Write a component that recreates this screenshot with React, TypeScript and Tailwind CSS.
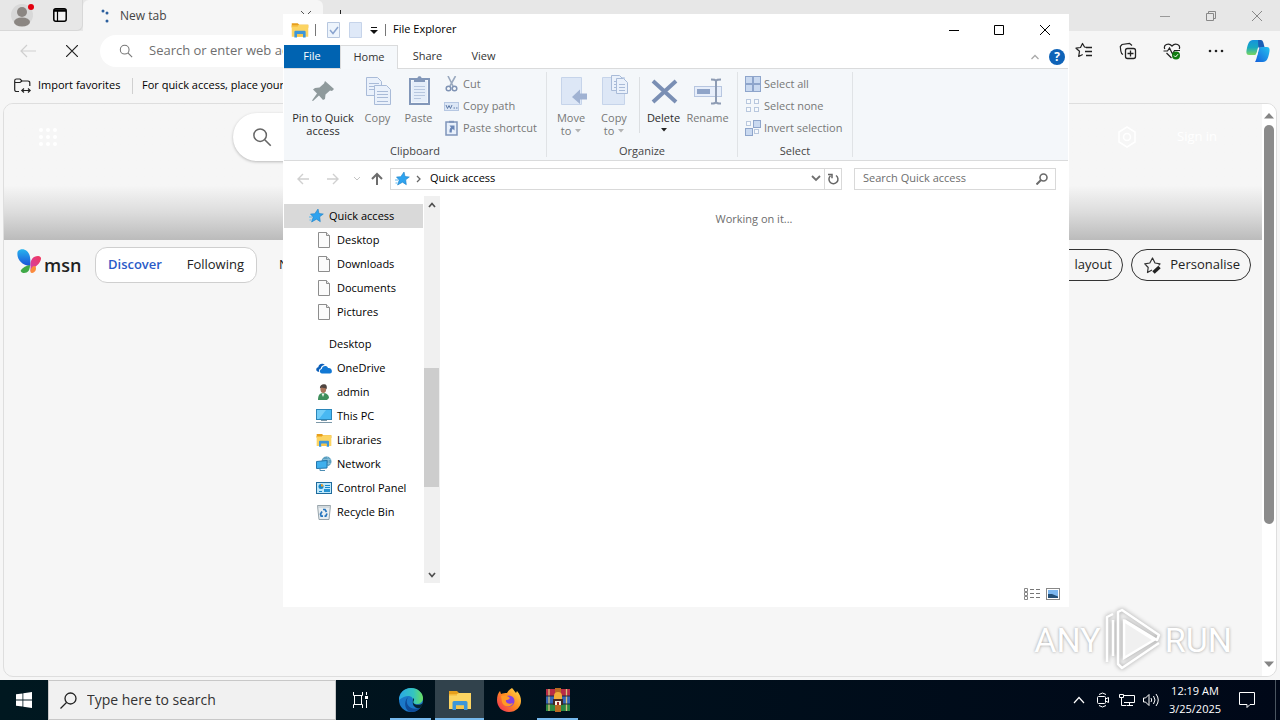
import React from "react";

type IconProps = { w: number; h: number; vb?: string; children: React.ReactNode; className?: string };

function Svg({ w, h, vb, children, className = "" }: IconProps) {
  return (
    <svg width={w} height={h} viewBox={vb ?? `0 0 ${w} ${h}`} fill="none" className={"shrink-0 " + className} aria-hidden="true">
      {children}
    </svg>
  );
}

/* ---------- shared icons ---------- */

function FolderIcon({ size = 18 }: { size?: number }) {
  return (
    <Svg w={size} h={size} vb="0 0 24 24">
      <path d="M1 3h8l2 2h12v4H1z" fill="#e79f1c" />
      <path d="M1 6h8l2-1h12v16H1z" fill="#fcd462" />
      <path d="M1 6h8v1.500H1z" fill="#f5b93a" />
      <path d="M6 13h12a1.500 1.500 0 0 1 1.500 1.500V22H16v-4.500H8V22H4.500v-7.500A1.500 1.500 0 0 1 6 13z" fill="#3d96d9" />
      <path d="M8 17.500h8V21H8z" fill="#f7c64b" />
    </Svg>
  );
}

function StarBlue() {
  return (
    <Svg w={16} h={16}>
      <path d="M10 1l1 4.500 4.300.5-3.600 2.800.6 4.900-3.800-2.500L3.600 14l1.600-4.900L2.500 6l4.300-.3z" fill="#2ea3ef" stroke="#1d7fc6" strokeWidth=".6" />
      <path d="M1 9h3M1.500 12h2" stroke="#5bb8f0" strokeWidth="1" />
    </Svg>
  );
}

function PageIcon() {
  return (
    <Svg w={16} h={16}>
      <path d="M2.500.5h8l3 3v12h-11z" fill="#fbfbfb" stroke="#8d8d8d" />
      <path d="M10.500.5v3h3" stroke="#8d8d8d" fill="#e6e6e6" />
    </Svg>
  );
}

function OneDriveIcon() {
  return (
    <Svg w={16} h={16}>
      <path d="M1.500 11.500C-.5 10.500 0 7.500 2.300 7.200 2.500 4 6.500 2.500 8.800 5 6.500 5 5 6.500 4.800 8.500 3 9 2.700 10.500 3.300 12z" fill="#0c5fb8" />
      <path d="M6 13.500c-3-.5-2.500-4.300-.2-4.500.3-3.500 5.200-4 6.200-1 3-.3 4 2 3.800 3 .3 1.500-.6 2.500-1.800 2.500z" fill="#1278d4" />
    </Svg>
  );
}

function UserIcon() {
  return (
    <Svg w={16} h={16}>
      <path d="M2 16c0-4.500 1.500-7 5-7s6 2 6 5l-2 2z" fill="#3f8f5c" />
      <path d="M5.500 9.500L7 13l1.500-3.500z" fill="#e9f3ea" />
      <ellipse cx="7.300" cy="5.200" rx="2.800" ry="3.800" fill="#a9745a" />
      <path d="M4 4.500C3.500 1 6.500-.3 8.500.3c2.500.3 2.700 3 2 5C9.500 3.500 7 4 5.500 3.500z" fill="#4f4540" />
    </Svg>
  );
}

function PcIcon() {
  return (
    <Svg w={16} h={16}>
      <rect x=".5" y="1.500" width="15" height="10" fill="#48b8f2" stroke="#2b86b9" />
      <path d="M1 2h9L3 11H1z" fill="#74cef8" />
      <path d="M5 12.500h6M0 14.500h16" stroke="#7c98a8" />
    </Svg>
  );
}

function NetworkIcon() {
  return (
    <Svg w={16} h={16}>
      <circle cx="10.500" cy="5.500" r="5" fill="#5c9fc0" />
      <path d="M10.500.500c3 2 3 8 0 10M7 3.500h8M7 7.500h8" stroke="#8cc3dd" strokeWidth=".8" />
      <path d="M.5 5.500l10.500-1v7.500l-10.500.5z" fill="#3fb0ee" stroke="#2276ad" />
      <path d="M4 12.500v2h5" stroke="#4c8db3" />
    </Svg>
  );
}

function ControlIcon() {
  return (
    <Svg w={16} h={16}>
      <rect x=".5" y="2.500" width="15" height="11" fill="#bfe8fb" stroke="#1f6b9c" />
      <circle cx="5" cy="6.500" r="2.500" fill="#1687c9" />
      <path d="M5 4v2.500h2.500A2.500 2.500 0 0 0 5 4z" fill="#f0a02a" />
      <path d="M9 5.500h5M9 7.500h5M3 11.500h3" stroke="#1687c9" />
      <rect x="8" y="9" width="6" height="3" fill="#2793d1" />
    </Svg>
  );
}

function BinIcon() {
  return (
    <Svg w={16} h={16}>
      <path d="M1.500 1.500h13l-1.500 14H3z" fill="#e9eef1" stroke="#97a3aa" />
      <path d="M1.500 3h13" stroke="#bcc6cb" />
      <path d="M7 5.500h2l1.500 2.500M11 9.500l-1.200 2.700H8.500M7 12.200H5.200L4.500 10 6 7.500" stroke="#2675bd" strokeWidth="1.700" />
    </Svg>
  );
}

/* ---------- ribbon icons ---------- */

function PinIcon() {
  return (
    <Svg w={32} h={32}>
      <path d="M18 6l9 8-2 2-2-.5-4.500 4L18 24l-2 1-4-4.500L6 26l-1-.6 5-6.900-4-4L8 13l4.500-.5 4.500-4z" fill="#8f9a9c" />
    </Svg>
  );
}

function Sheet({ x, y, w = 14, h = 19 }: { x: number; y: number; w?: number; h?: number }) {
  return (
    <g transform={`translate(${x} ${y})`}>
      <path d={`M.5.5h${w - 5}l4 4v${h - 5}H.5z`} fill="#eaf1fb" stroke="#a9bbd8" />
      <path d={`M${w - 5}.5v4h4.500`} stroke="#a9bbd8" />
      <path d={`M3 6.500h${w - 6}M3 9.500h${w - 6}M3 12.500h${w - 6}`} stroke="#a9bbd8" />
    </g>
  );
}

function CopyIcon() {
  return (
    <Svg w={32} h={32}>
      <Sheet x={4} y={2} w={16} />
      <Sheet x={12} y={10} w={17} h={20} />
      <path d="M15 26.500h11" stroke="#a9bbd8" />
    </Svg>
  );
}

function PasteIcon() {
  return (
    <Svg w={32} h={32}>
      <rect x="7" y="4" width="19" height="25" fill="#fff" stroke="#8297b9" strokeWidth="2" />
      <rect x="8.500" y="5.500" width="16" height="22" fill="#e4edf9" />
      <path d="M11 3h3.500c0-2.500 4-2.500 4 0H22v4H11z" fill="#8297b9" />
      <path d="M11 11.500h11M11 14.500h11M11 17.500h11M11 20.500h11M11 23.500h7" stroke="#b7c7df" />
    </Svg>
  );
}

function CutIcon() {
  return (
    <Svg w={16} h={16}>
      <path d="M4 0l5 10M11.500 0L6 10" stroke="#9aa9bf" strokeWidth="1.600" />
      <circle cx="4.500" cy="12.500" r="2.300" stroke="#7f93b4" strokeWidth="1.500" />
      <circle cx="10.500" cy="12.500" r="2.300" stroke="#7f93b4" strokeWidth="1.500" />
    </Svg>
  );
}

function PathIcon() {
  return (
    <Svg w={16} h={16}>
      <rect x=".5" y="4.500" width="14" height="8" fill="#dce7f6" stroke="#b6c7e2" />
      <path d="M2 7l1.500 3.500L5 7.500l1.500 3L8 7M9.500 10h1.500M12 10h1.500" stroke="#5f7ba8" />
    </Svg>
  );
}

function ShortcutIcon() {
  return (
    <Svg w={16} h={16}>
      <rect x="2" y="2" width="11" height="13" fill="#e8f0fb" stroke="#7f95ba" strokeWidth="1.500" />
      <path d="M5 .8h5v2H5z" fill="#7f95ba" />
      <path d="M5.500 12.500c0-2.500 0-4 1.500-5L5.500 5.500h5v5L8.800 9c-1 .5-1 1.500-1 3.500z" fill="#6a86b6" />
    </Svg>
  );
}

function MoveIcon() {
  return (
    <Svg w={32} h={32}>
      <path d="M6.500 2.500h20v27h-20z" fill="#dde7f6" stroke="#c6d4ea" />
      <path d="M17 22l8-7.500V18.500h7v6h-7V29z" fill="#a0b2d2" />
    </Svg>
  );
}

function CopyToIcon() {
  return (
    <Svg w={32} h={32}>
      <path d="M4.500 2.500h22v27h-22z" fill="#dde7f6" stroke="#c6d4ea" />
      <Sheet x={13} y={0} w={13} h={16} />
      <Sheet x={18} y={3} w={12} h={16} />
    </Svg>
  );
}

function DeleteIcon() {
  return (
    <Svg w={32} h={32}>
      <path d="M5 6l23 21M28 6L5 27" stroke="#7a8fb4" strokeWidth="4" />
    </Svg>
  );
}

function RenameIcon() {
  return (
    <Svg w={32} h={32}>
      <rect x="2.500" y="11.500" width="27" height="10" fill="#e7eefa" stroke="#b7c6e0" />
      <rect x="5" y="14" width="13" height="5" fill="#8fa4c8" />
      <path d="M24 5v22M19 4.500c3 0 5 0 5 2 0-2 2-2 5-2M19 28.500c3 0 5 0 5-2 0 2 2 2 5 2" stroke="#8d9bb3" strokeWidth="2" />
    </Svg>
  );
}

function GridIcon({ kind }: { kind: "all" | "none" | "invert" }) {
  const cells = [
    [0, 0], [8, 0], [0, 8], [8, 8],
  ];
  return (
    <Svg w={16} h={16}>
      {cells.map(([x, y], i) => {
        const full = kind === "all" || (kind === "invert" && (i === 1 || i === 2));
        return full ? (
          <rect key={i} x={x + 0.5} y={y + 0.5} width="7" height="7" fill="#c9d9f0" stroke="#8ea5cb" />
        ) : (
          <rect key={i} x={x + 1.5} y={y + 1.5} width="4" height="4" fill="#f7fafd" stroke="#b9c8de" />
        );
      })}
    </Svg>
  );
}

/* ---------- browser icons ---------- */

function SearchGlyph({ size, color }: { size: number; color: string }) {
  return (
    <Svg w={size} h={size} vb="0 0 16 16">
      <circle cx="6.500" cy="6.500" r="5" stroke={color} strokeWidth="1.200" />
      <path d="M10.200 10.200L15 15" stroke={color} strokeWidth="1.300" />
    </Svg>
  );
}

function MsnLogo() {
  return (
    <Svg w={25} h={25} className="mb-2">
      <defs>
        <linearGradient id="msnBlue" x1="0" y1="0" x2="0" y2="1">
          <stop offset="0" stopColor="#27b4ee" />
          <stop offset="1" stopColor="#1a50d8" />
        </linearGradient>
        <linearGradient id="msnPink" x1="1" y1="0" x2="0" y2="1">
          <stop offset="0" stopColor="#f2395a" />
          <stop offset="1" stopColor="#d13fae" />
        </linearGradient>
      </defs>
      <path d="M1 2c4-4 11-1 12 6 .5 3 .5 6 .3 9C8 17 2 13 .8 8 .2 5 .2 3 1 2z" fill="url(#msnBlue)" />
      <path d="M13 16c0 5-2 8-6 8-2 0-4-1.500-3-3 2-2.500 5-4.500 9-5z" fill="#3fa947" />
      <path d="M13.500 17C13 11 16 7 21 7c2 0 3.500 1.500 3 3C23 15 19 17 13.500 22z" fill="url(#msnPink)" />
      <path d="M13.500 21c1-3 3-5 5-3.500 1.500 2.500-.5 6.500-3.500 6.500-1.500 0-2-1.500-1.500-3z" fill="#fb8a3c" />
    </Svg>
  );
}

function CopilotIcon() {
  return (
    <Svg w={24} h={24} className="ml-[21px]">
      <defs>
        <linearGradient id="copA" x1="0" y1="0" x2="0" y2="1">
          <stop offset="0" stopColor="#1593dd" />
          <stop offset=".5" stopColor="#17a9c0" />
          <stop offset="1" stopColor="#7ad65f" />
        </linearGradient>
        <linearGradient id="copB" x1="1" y1="0" x2="0" y2="1">
          <stop offset="0" stopColor="#23c2f0" />
          <stop offset="1" stopColor="#145fdb" />
        </linearGradient>
      </defs>
      <path d="M7 1h8c-2 2-3 14-6 15H3c-3 0-3-3-2-7S3 1 7 1z" fill="url(#copA)" />
      <path d="M17 23H9c2-2 3-14 6-15h6c3 0 3 3 2 7s-2 8-6 8z" fill="url(#copB)" />
      <path d="M12 1h3c2 0 2.500 3 3.500 7H15c-1 .5-2 3-2.500 6z" fill="#1a5fb6" />
      <path d="M13.500 8.500l-2.500 8H10l2-8z" fill="#f3f8fc" />
    </Svg>
  );
}

function FavoritesIcon() {
  return (
    <Svg w={18} h={18}>
      <path d="M11.500 5.500L9.500 5 7.500 1.500 5.500 5.500l-4.500.7 3.500 3-.8 5.300 4-2" stroke="#222" strokeWidth="1.200" strokeLinejoin="round" />
      <path d="M11 5.500h6M10 9.500h7M11 13.500h6" stroke="#222" strokeWidth="1.300" />
    </Svg>
  );
}

function CollectionsIcon() {
  return (
    <Svg w={18} h={18}>
      <rect x="6.500" y="6.500" width="10" height="10" rx="2" stroke="#222" strokeWidth="1.300" />
      <path d="M11.500 8.500v6M8.500 11.500h6" stroke="#222" strokeWidth="1.300" />
      <path d="M4 12.500C2.500 12 2 10.500 1.800 9L1.300 4.500 3 2.500l7.500-1.200L13 3.500" stroke="#222" strokeWidth="1.200" />
    </Svg>
  );
}

function HealthIcon() {
  return (
    <Svg w={18} h={18}>
      <path d="M1.800 7C0 3 5.500 0 9 4c3.500-4 9-1 7.200 3M3.500 11l5 5" stroke="#222" strokeWidth="1.200" />
      <path d="M.5 9h4l2-3 3 6 2-3.500h5.500" stroke="#222" strokeWidth="1.200" />
      <circle cx="13" cy="13.500" r="4" fill="#107c10" />
      <path d="M11 13.500l1.500 1.500 2.500-2.800" stroke="#fff" />
    </Svg>
  );
}

/* ---------- explorer parts ---------- */

function BigButton({ icon, lines, width, active, arrow }: { icon: React.ReactNode; lines: string[]; width: string; active?: boolean; arrow?: "below" | "inline" }) {
  return (
    <button type="button" className={"flex flex-col items-center pt-0.5 leading-[13px] " + width + (active ? " text-[#2b2b2b]" : " text-[#777]")}>
      {icon}
      <span className="mt-1 block whitespace-nowrap">{lines[0]}</span>
      {lines[1] && (
        <span className="flex items-center gap-1 whitespace-nowrap">
          {lines[1]}
          {arrow === "inline" && <Svg w={6} h={4}><path d="M0 0h6L3 3.500z" fill="#b4b4b4" /></Svg>}
        </span>
      )}
      {arrow === "below" && <Svg w={6} h={4} className="mt-1"><path d="M0 0h6L3 3.500z" fill="#222" /></Svg>}
    </button>
  );
}

function SmallButton({ icon, label }: { icon: React.ReactNode; label: string }) {
  return (
    <button type="button" className="flex h-[22px] items-center gap-[3px] whitespace-nowrap text-[#777]">
      {icon}
      {label}
    </button>
  );
}

function Group({ title, width, children }: { title: string; width: string; children: React.ReactNode }) {
  return (
    <section className={"my-[3px] flex flex-col justify-between border-r border-[#e0e3e6] " + width}>
      <div className="flex pt-px">{children}</div>
      <h2 className="text-center leading-3 text-[#444]">{title}</h2>
    </section>
  );
}

function TreeRow({ icon, label, selected, indent }: { icon?: React.ReactNode; label: string; selected?: boolean; indent: string }) {
  return (
    <li>
      <a href="#" className={"flex h-6 items-center gap-[5px] whitespace-nowrap text-black " + indent + (selected ? " bg-[#d9d9d9]" : "")}>
        {icon}
        {label}
      </a>
    </li>
  );
}

function Explorer() {
  return (
    <section aria-label="File Explorer" className="absolute left-[283px] top-[14px] flex h-[593px] w-[786px] flex-col bg-white px-px text-[11px] text-black">
      <header className="flex h-[31px] shrink-0 items-center">
        <div className="flex flex-1 items-center pl-[7px]">
          <FolderIcon size={18} />
          <span className="ml-1.5 h-3 w-px bg-[#777]" />
          <Svg w={14} h={16} className="ml-[11px]">
            <path d="M.5.5h12v15H.5z" fill="#edf4fc" stroke="#b7c7df" />
            <path d="M3 8l3 3.500L11 5" stroke="#8aa4cf" strokeWidth="1.500" />
          </Svg>
          <Svg w={14} h={16} className="ml-2">
            <path d="M.5.5h12v15H.5z" fill="#dfe9f8" stroke="#c6d4ea" />
          </Svg>
          <Svg w={8} h={8} className="ml-[7px]">
            <path d="M1 1.500h6" stroke="#111" />
            <path d="M0 4h8L4 8z" fill="#111" />
          </Svg>
          <span className="ml-[7px] h-3 w-px bg-[#777]" />
          <h1 className="ml-[7px]">File Explorer</h1>
        </div>
        <button type="button" aria-label="Minimize" className="flex w-[45px] justify-center"><Svg w={10} h={10}><path d="M0 5.500h10" stroke="#000" /></Svg></button>
        <button type="button" aria-label="Maximize" className="flex w-[45px] justify-center"><Svg w={10} h={10}><path d="M.5.500h9v9h-9z" stroke="#000" /></Svg></button>
        <button type="button" aria-label="Close" className="flex w-[47px] justify-center"><Svg w={10} h={10}><path d="M0 0l10 10M10 0L0 10" stroke="#000" /></Svg></button>
      </header>

      <nav className="flex h-6 shrink-0 border-b border-[#dadbdc] text-[#333]">
        <button type="button" className="w-14 bg-[#0063b1] text-white">File</button>
        <button type="button" className="-mb-px w-[58px] border border-b-0 border-[#dadbdc] bg-[#f5f8fb]">Home</button>
        <button type="button" className="w-[59px]">Share</button>
        <button type="button" className="w-[53px]">View</button>
        <div className="flex flex-1 items-center justify-end gap-2.5 pr-[3px]">
          <Svg w={8} h={6}><path d="M.5 5L4 1.500 7.500 5" stroke="#aaa" strokeWidth="1.300" /></Svg>
          <button type="button" aria-label="Help" className="flex size-4 items-center justify-center rounded-full bg-[#0f63b8] text-xs font-bold text-white">?</button>
        </div>
      </nav>

      <div className="flex h-[92px] shrink-0 border-b border-[#dadbdc] bg-[#f4f7fa]">
        <Group title="Clipboard" width="w-[263px]">
          <BigButton icon={<PinIcon />} lines={["Pin to Quick", "access"]} width="w-[78px]" active />
          <BigButton icon={<CopyIcon />} lines={["Copy"]} width="w-[31px]" />
          <BigButton icon={<PasteIcon />} lines={["Paste"]} width="w-[51px]" />
          <div className="flex flex-col">
            <SmallButton icon={<CutIcon />} label="Cut" />
            <SmallButton icon={<PathIcon />} label="Copy path" />
            <SmallButton icon={<ShortcutIcon />} label="Paste shortcut" />
          </div>
        </Group>
        <Group title="Organize" width="w-[191px]">
          <BigButton icon={<MoveIcon />} lines={["Move", "to"]} width="w-[48px]" arrow="inline" />
          <BigButton icon={<CopyToIcon />} lines={["Copy", "to"]} width="w-[38px]" arrow="inline" />
          <span className="mx-1.5 mt-1 h-14 w-px bg-[#dcdfe2]" />
          <BigButton icon={<DeleteIcon />} lines={["Delete"]} width="w-[35px]" active arrow="below" />
          <BigButton icon={<RenameIcon />} lines={["Rename"]} width="w-[53px]" />
        </Group>
        <Group title="Select" width="w-[115px]">
          <div className="flex flex-col pl-[7px]">
            <SmallButton icon={<GridIcon kind="all" />} label="Select all" />
            <SmallButton icon={<GridIcon kind="none" />} label="Select none" />
            <SmallButton icon={<GridIcon kind="invert" />} label="Invert selection" />
          </div>
        </Group>
      </div>

      <div className="flex h-[35px] shrink-0 items-center pr-3">
        <div className="flex w-[106px] items-center pl-[13px]">
          <Svg w={12} h={12}><path d="M12 6H1M6 1L1 6l5 5" stroke="#d0d0d0" strokeWidth="1.400" /></Svg>
          <Svg w={12} h={12} className="ml-[18px]"><path d="M0 6h11M6 1l5 5-5 5" stroke="#d0d0d0" strokeWidth="1.400" /></Svg>
          <Svg w={8} h={5} className="ml-3.5"><path d="M1 1l3 3 3-3" stroke="#c4c4c4" /></Svg>
          <Svg w={12} h={14} className="ml-2.5"><path d="M6 13V2M1 7l5-5 5 5" stroke="#6d6d6d" strokeWidth="2" /></Svg>
        </div>
        <div className="flex h-[22px] flex-1 items-center border border-[#d9d9d9] pl-[3px]">
          <StarBlue />
          <Svg w={6} h={8} className="ml-1.5"><path d="M1 1l3 3-3 3" stroke="#666" strokeWidth="1.300" /></Svg>
          <span className="ml-2 flex-1">Quick access</span>
          <Svg w={10} h={7} className="mr-[3px]"><path d="M1 1l4 4 4-4" stroke="#707070" strokeWidth="1.800" /></Svg>
          <button type="button" aria-label="Refresh" className="flex h-full w-[17px] items-center justify-center border-l border-[#d9d9d9]">
            <Svg w={12} h={12}><path d="M9 2.500A4.500 4.500 0 1 1 3.500 2.800M1 1.500h4v3.800" stroke="#666" strokeWidth="1.500" /></Svg>
          </button>
        </div>
        <label className="ml-3 flex h-[22px] w-[202px] items-center border border-[#d9d9d9] pl-2 pr-[7px]">
          <input aria-label="Search Quick access" placeholder="Search Quick access" className="min-w-0 flex-1 outline-none placeholder:text-[#6d6d6d]" />
          <Svg w={12} h={12}><circle cx="7.500" cy="4.500" r="3.500" stroke="#6b6b6b" strokeWidth="1.600" /><path d="M5 7l-4.500 4.500" stroke="#6b6b6b" strokeWidth="2" /></Svg>
        </label>
      </div>

      <div className="flex min-h-0 flex-1">
        <ul className="w-[139px] shrink-0 pt-2">
          <TreeRow icon={<StarBlue />} label="Quick access" selected indent="pl-6" />
          <TreeRow icon={<PageIcon />} label="Desktop" indent="pl-8" />
          <TreeRow icon={<PageIcon />} label="Downloads" indent="pl-8" />
          <TreeRow icon={<PageIcon />} label="Documents" indent="pl-8" />
          <TreeRow icon={<PageIcon />} label="Pictures" indent="pl-8" />
          <li className="h-2" />
          <TreeRow label="Desktop" indent="pl-[45px]" />
          <TreeRow icon={<OneDriveIcon />} label="OneDrive" indent="pl-8" />
          <TreeRow icon={<UserIcon />} label="admin" indent="pl-8" />
          <TreeRow icon={<PcIcon />} label="This PC" indent="pl-8" />
          <TreeRow icon={<FolderIcon size={16} />} label="Libraries" indent="pl-8" />
          <TreeRow icon={<NetworkIcon />} label="Network" indent="pl-8" />
          <TreeRow icon={<ControlIcon />} label="Control Panel" indent="pl-8" />
          <TreeRow icon={<BinIcon />} label="Recycle Bin" indent="pl-8" />
        </ul>
        <div className="ml-px flex w-4 shrink-0 flex-col items-center justify-between bg-[#f0f0f0] pb-[5px] pt-1.5 pr-px">
          <Svg w={8} h={6}><path d="M1 5l3-3.500L7 5" stroke="#505050" strokeWidth="1.700" /></Svg>
          <span className="mb-[85px] mt-auto h-[119px] w-full bg-[#cdcdcd]" />
          <Svg w={8} h={6}><path d="M1 1l3 3.500L7 1" stroke="#505050" strokeWidth="1.700" /></Svg>
        </div>
        <p className="flex-1 pt-4 text-center leading-[14px] text-[#6d6d6d]">Working on it...</p>
      </div>

      <footer className="flex h-6 shrink-0 items-center justify-end gap-1.5 pr-2 pb-[3px]">
        <Svg w={16} h={12}>
          <path d="M.5.5h3v3h-3zM.5 4.500h3v3h-3zM.5 8.500h3v3h-3z" stroke="#888" />
          <path d="M6 1.500h4M12 1.500h4M6 5.500h4M12 5.500h4M6 9.500h4M12 9.500h4" stroke="#777" />
        </Svg>
        <Svg w={14} h={12}>
          <rect x=".5" y=".5" width="13" height="11" fill="#fff" stroke="#888" />
          <rect x="2" y="2" width="10" height="8" fill="#7cb7f0" />
          <path d="M2 6l4 0 6 2.500V10H2z" fill="#245078" />
        </Svg>
      </footer>
    </section>
  );
}

/* ---------- browser ---------- */

function Browser() {
  return (
    <div className="flex min-h-0 flex-1 flex-col bg-[#f6f6f6]">
      <div className="flex h-[31px] shrink-0 bg-[#e7e7e7]">
        <div className="flex w-[83px] items-center rounded-br-md border-b border-r border-[#d8d8d8] pl-[11px]">
          <Svg w={24} h={24}>
            <circle cx="11" cy="12" r="11" fill="#d8d8d8" />
            <circle cx="11" cy="9" r="5" fill="#8b8682" />
            <ellipse cx="11" cy="19" rx="8" ry="4.500" fill="#8b8682" />
            <circle cx="20" cy="4" r="3" fill="#e3000f" />
          </Svg>
          <Svg w={14} h={14} className="ml-[18px]">
            <rect x=".8" y=".8" width="12.400" height="12.400" rx="2" fill="#f2f2f2" stroke="#000" strokeWidth="1.500" />
            <path d="M1 2.500h12" stroke="#000" strokeWidth="2.500" />
            <path d="M4.500 3v10" stroke="#000" strokeWidth="1.200" />
          </Svg>
        </div>
        <div className="flex w-60 items-center rounded-t-md bg-[#f6f6f6] pl-[17px] text-xs text-[#444]">
          <Svg w={14} h={16}><circle cx="3" cy="3" r="1.500" fill="#2c5f9e" /><circle cx="7" cy="5" r="1.500" fill="#2c5f9e" /><circle cx="7" cy="13" r="1.500" fill="#2c5f9e" /></Svg>
          <span className="ml-1.5 flex-1">New tab</span>
          <Svg w={10} h={10} className="mr-3"><path d="M0 0l10 10M10 0L0 10" stroke="#555" /></Svg>
        </div>
        <div className="flex flex-1 items-center pl-3"><Svg w={12} h={12}><path d="M5.500 0v12M0 6h12" stroke="#222" /></Svg></div>
        <button type="button" aria-label="Minimize browser" className="flex w-[46px] items-center justify-center"><Svg w={10} h={10}><path d="M0 5.500h10" stroke="#999" /></Svg></button>
        <button type="button" aria-label="Restore browser" className="flex w-[46px] items-center justify-center"><Svg w={10} h={10}><path d="M.5 2.500h7v7h-7zM2.500 2.500v-2h7v7h-2" stroke="#888" /></Svg></button>
        <button type="button" aria-label="Close browser" className="flex w-[46px] items-center justify-center"><Svg w={12} h={12}><path d="M1 1l10 10M11 1L1 11" stroke="#888" /></Svg></button>
      </div>

      <div className="flex h-10 shrink-0 items-center pr-2.5">
        <Svg w={16} h={14} className="ml-5"><path d="M16 7H1M7 1L1 7l6 6" stroke="#cfcfcf" strokeWidth="1.200" /></Svg>
        <Svg w={12} h={12} className="ml-[30px]"><path d="M0 0l12 12M12 0L0 12" stroke="#222" strokeWidth="1.200" /></Svg>
        <label className="ml-[22px] mr-[26px] flex h-8 flex-1 items-center rounded-full bg-white pl-[19px]">
          <SearchGlyph size={14} color="#777" />
          <input aria-label="Address" placeholder="Search or enter web address" className="ml-4 min-w-0 flex-1 text-[13px] outline-none placeholder:text-[#6f6f6f]" />
        </label>
        <div className="flex items-center gap-[26px]">
          <FavoritesIcon />
          <CollectionsIcon />
          <HealthIcon />
          <Svg w={18} h={18}><circle cx="3" cy="9" r="1.300" fill="#222" /><circle cx="9" cy="9" r="1.300" fill="#222" /><circle cx="15" cy="9" r="1.300" fill="#222" /></Svg>
        </div>
        <CopilotIcon />
      </div>

      <div className="flex h-8 shrink-0 items-center whitespace-nowrap pb-[3px] pl-3.5 text-[11px] text-black">
        <Svg w={17} h={16}>
          <path d="M5 13.500H2.500A1.800 1.800 0 0 1 .7 11.700v-9C.7 1.500 1.500 1 2.500 1H6l2 2h6a1.800 1.800 0 0 1 1.800 1.800V8M.7 4.500H6L8 3" stroke="#222" strokeWidth="1.200" />
          <path d="M8 12.500h8M10 10.500l-2.200 2 2.200 2M14 10.500l2.200 2-2.200 2" stroke="#222" strokeWidth="1.200" />
        </Svg>
        <a href="#" className="ml-[7px] w-[94px]">Import favorites</a>
        <span className="h-4 w-px bg-[#d0d0d0]" />
        <span className="ml-[9px]">For quick access, place your</span>
      </div>

      <main className="mx-[3px] mb-[3px] flex min-h-0 flex-1 overflow-hidden rounded-[10px] border border-[#dedede] bg-[#f6f6f6]">
        <div className="flex min-w-0 flex-1 flex-col">
          <div className="flex h-[136px] shrink-0 items-start bg-linear-to-b from-[#f6f6f6] from-60% via-[#dcdcdc] via-80% to-[#bbbbbb]">
            <Svg w={18} h={18} className="ml-[35px] mt-6">
              {[2, 9, 16].map((y) => [2, 9, 16].map((x) => <circle key={`${x}-${y}`} cx={x} cy={y} r="2" fill="#fff" />))}
            </Svg>
            <div className="ml-44 mr-[200px] mt-[9px] flex h-12 flex-1 items-center rounded-full bg-white pl-[19px] shadow-[0_1px_3px_rgba(0,0,0,0.25)]">
              <SearchGlyph size={20} color="#666" />
            </div>
            <div className="-ml-[55px] mt-[22px] flex w-[145px] shrink-0 items-center text-[13px] text-white">
              <Svg w={20} h={22}>
                <path d="M10 1l8 5v10l-8 5-8-5V6z" stroke="#fff" strokeWidth="1.500" />
                <circle cx="10" cy="11" r="3.500" stroke="#fff" strokeWidth="1.500" />
              </Svg>
              <span className="ml-10">Sign in</span>
            </div>
          </div>
          <div className="flex h-[50px] shrink-0 items-center pl-[13px] pr-[11px] text-[13px] text-[#222]">
            <MsnLogo />
            <span className="ml-0.5 w-[51px] text-lg font-semibold leading-6">msn</span>
            <div className="flex h-9 w-[162px] items-center justify-between rounded-xl border border-[#cfcfcf] bg-white px-3">
              <a href="#" className="font-semibold text-[#2a5bc8]">Discover</a>
              <a href="#">Following</a>
            </div>
            <a href="#" className="ml-[22px]">News</a>
            <button type="button" className="ml-auto flex h-8 w-[140px] items-center justify-end gap-2 rounded-full border border-[#333] pr-2.5">
              <span>Edit</span>
              <span>layout</span>
            </button>
            <button type="button" className="ml-2 flex h-8 w-[120px] items-center justify-between rounded-full border border-[#333] pl-3 pr-2.5">
              <Svg w={18} h={18}>
                <path d="M8 14l-4.500 2.500.7-5L.8 7.800l5-.8L8.500 2l2.500 5 5 .8-1.300 1.500" stroke="#333" strokeWidth="1.200" strokeLinejoin="round" />
                <path d="M9.500 16.500l6-5.500" stroke="#222" strokeWidth="3.500" />
              </Svg>
              Personalise
            </button>
          </div>
        </div>
        <div className="flex w-3.5 shrink-0 flex-col items-center rounded-r-lg bg-white py-2">
          <Svg w={10} h={7}><path d="M0 6.500h10L5 1z" fill="#858585" /></Svg>
          <span className="my-1.5 h-[399px] w-2.5 rounded-full bg-[#8b8b8b]" />
          <Svg w={10} h={7} className="mt-auto"><path d="M0 .5h10L5 6z" fill="#858585" /></Svg>
        </div>
      </main>
    </div>
  );
}

/* ---------- watermark ---------- */

function Watermark() {
  return (
    <div className="absolute bottom-12 right-12 flex h-16 items-center font-['Roboto',sans-serif] text-[34px] leading-none text-white [text-shadow:0_0_3px_#999]">
      <span>ANY</span>
      <Svg w={56} h={64} className="mx-1 drop-shadow-[0_0_2px_#999]">
        <path d="M2 54V9l6-3M8 12v36" stroke="#fff" strokeWidth="2.500" strokeLinejoin="round" />
        <path d="M13 50V4l4-2 37 25-2 5L19 12M13 50l0 6 4 4 37-25" stroke="#fff" strokeWidth="2.500" strokeLinejoin="round" />
        <path d="M19 13l30 19-30 18z" fill="#f0f0f0" stroke="#fff" strokeWidth="2.500" />
      </Svg>
      <span>RUN</span>
    </div>
  );
}

/* ---------- taskbar ---------- */

function TaskButton({ label, children, running, active }: { label: string; children: React.ReactNode; running?: boolean; active?: boolean }) {
  return (
    <button type="button" aria-label={label} className={"relative flex h-full w-[49px] items-center justify-center" + (active ? " bg-[#31424c]" : "")}>
      {children}
      {running && <span className={"absolute bottom-0 h-0.5 bg-[#76b9ed] " + (active ? "inset-x-0" : "inset-x-1")} />}
    </button>
  );
}

function EdgeIcon() {
  return (
    <Svg w={24} h={24}>
      <defs>
        <linearGradient id="edgeA" x1="0" y1="0" x2="1" y2="0">
          <stop offset="0" stopColor="#2aa7e6" />
          <stop offset=".6" stopColor="#34c5c0" />
          <stop offset="1" stopColor="#6ade60" />
        </linearGradient>
      </defs>
      <circle cx="12" cy="12" r="12" fill="#1b78c8" />
      <path d="M0 12C0 5 5 0 12 0s12 5 12 10c0 4-3 6-6 6-3 0-5-1-4-3 1-5-6-8-14-1z" fill="url(#edgeA)" />
      <path d="M9 9c-4 7 2 14 12 11-2 3-6 4-9 4C6 23 4 14 9 9z" fill="#0f4c99" />
      <path d="M14.500 10c2 2-2 4 1 6 3 1.500 6 1 8.500-1-1 3-2 4-3 5-5 1-9-3-6.500-10z" fill="#062433" />
    </Svg>
  );
}

function FirefoxIcon() {
  return (
    <Svg w={24} h={24}>
      <defs>
        <linearGradient id="ffx" x1="1" y1="0" x2="0" y2="1">
          <stop offset="0" stopColor="#ffe14d" />
          <stop offset=".5" stopColor="#ff8a1f" />
          <stop offset="1" stopColor="#ee2260" />
        </linearGradient>
      </defs>
      <path d="M15 0c2 2 3 4 4 5l1-2c3 3 4 7 4 10 0 6-5 11-12 11S0 19 0 12c0-4 1-7 3-9l1 3c2-1 4-1 6-1 1-2 3-4 5-5z" fill="url(#ffx)" />
      <circle cx="12" cy="13" r="5.500" fill="#8541e0" />
      <path d="M4 8c4-1 6 0 8 1 2 2-1 3-3 3-1 3 4 5 7 3-2 5-10 4-11-1z" fill="#ff9a26" />
    </Svg>
  );
}

function RarIcon() {
  return (
    <Svg w={24} h={24}>
      <rect x="0" y="1" width="24" height="7" fill="#b82c46" />
      <rect x="0" y="8" width="24" height="8" fill="#3465b4" />
      <rect x="0" y="16" width="24" height="7" fill="#2d8a43" />
      <path d="M3 1v22M20.500 1v22" stroke="#d9c27c" strokeWidth="1.300" />
      <path d="M0 8h24M0 16h24" stroke="#202838" />
      <rect x="9" y="0" width="6" height="24" fill="#b96a22" />
      <path d="M8 13V8a4 4 0 0 1 8 0v5z" fill="#f0ad39" />
      <path d="M7 11h10v6H7z" fill="#432721" />
      <path d="M9 13h6v4H9z" fill="#f6eee0" />
      <path d="M11 14h2v3h-2z" fill="#9a2525" />
    </Svg>
  );
}

function Taskbar() {
  return (
    <footer className="flex h-10 shrink-0 items-center bg-linear-to-r from-[#001820] to-[#000818] text-white">
      <button type="button" aria-label="Start" className="flex w-12 justify-center">
        <Svg w={16} h={16}><path d="M0 2.300L6.500 1.400v6.100H0zM7.300 1.300L16 0v7.500H7.300zM0 8.400h6.500v6.200L0 13.700zM7.300 8.400H16V16l-8.700-1.200z" fill="#fff" /></Svg>
      </button>
      <label className="flex h-full w-72 items-center border border-[#c8c8c8] bg-[#f1f1f1] pl-[11px]">
        <Svg w={17} h={17}><circle cx="10.500" cy="6.500" r="5.500" stroke="#222" strokeWidth="1.300" /><path d="M6.500 10.500L.5 16.500" stroke="#222" strokeWidth="1.300" /></Svg>
        <input aria-label="Type here to search" placeholder="Type here to search" className="ml-2.5 min-w-0 flex-1 text-sm outline-none placeholder:text-[#333]" />
      </label>
      <TaskButton label="Task View">
        <Svg w={17} h={16}><path d="M1.500 0v3.500h9V0M1.500 16v-3.500h9V16M2.500 4v8M9.500 4v8M14.500 0v3M14.500 8v8" stroke="#fff" /><rect x="13" y="4" width="3" height="3" fill="#fff" /></Svg>
      </TaskButton>
      <div className="ml-px flex h-full">
        <TaskButton label="Edge" running><EdgeIcon /></TaskButton>
        <TaskButton label="File Explorer" running active><FolderIcon size={24} /></TaskButton>
        <TaskButton label="Firefox"><FirefoxIcon /></TaskButton>
        <TaskButton label="WinRAR" running><RarIcon /></TaskButton>
      </div>
      <div className="ml-auto flex h-full items-center">
        <Svg w={12} h={8} className="mr-3"><path d="M1 7l5-5.500L11 7" stroke="#fff" strokeWidth="1.200" /></Svg>
        <Svg w={12} h={16} className="mr-2.5"><rect x=".5" y="4.500" width="8" height="7" rx="1" stroke="#fff" /><path d="M8.500 7l3-1.500v5l-3-1.500M2 2.500Q5.500-.5 9 2.500M2 13.500q3.500 3 7 0" stroke="#fff" /></Svg>
        <Svg w={16} h={14} className="mr-2"><path d="M5 2.500h10.500v7H5M8 12.500h6M10.500 9.500v3M.5 1.500h4v3h-4zM2.500 5v7.500h5" stroke="#fff" /></Svg>
        <Svg w={17} h={14} className="mr-2"><path d="M.5 5h2L6 1.500v11L2.500 9h-2zM8 5q1.500 2 0 4M10.500 3q3 4 0 8M13 1q4.500 6 0 12" stroke="#fff" /></Svg>
        <time className="w-[54px] text-center text-[11px] leading-[18px]">12:19 AM<br />3/25/2025</time>
        <Svg w={16} h={16} className="ml-[17px] mr-5"><path d="M.5.500h15v12H11l-3 3v-3H.5z" stroke="#fff" /></Svg>
        <span className="mr-1 h-full w-px bg-[#4a5560]" />
      </div>
    </footer>
  );
}

export default function App() {
  return (
    <div className="relative flex h-screen flex-col overflow-hidden font-['Open_Sans','Noto_Sans',sans-serif]">
      <Browser />
      <Taskbar />
      <Explorer />
      <Watermark />
    </div>
  );
}
